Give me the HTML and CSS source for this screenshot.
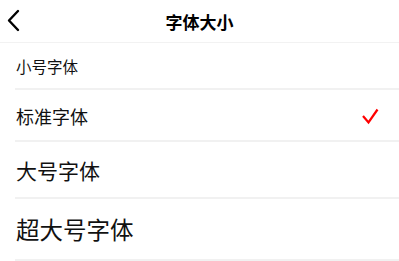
FILE: index.html
```html
<!DOCTYPE html>
<html lang="zh">
<head>
<meta charset="utf-8">
<link rel="stylesheet" href="styles.css">
</head>
<body>
<div class="page">
  <header class="bar">
    <span class="back">
      <svg width="14" height="24" viewBox="0 0 14 24"><path d="M11 3 L2 12.5 L11 22" fill="none" stroke="#000" stroke-width="2.4" stroke-linecap="round" stroke-linejoin="round"/></svg>
    </span>
    <h1 class="title">字体大小</h1>
  </header>
  <ul class="list">
    <li class="row row-s"><span class="label">小号字体</span></li>
    <li class="row row-m"><span class="label">标准字体</span>
      <svg class="check" width="18" height="18" viewBox="0 0 18 18"><path d="M2 9 L7.5 15.5 L16.5 2.5" fill="none" stroke="#f00" stroke-width="2.2" stroke-linejoin="miter"/></svg>
    </li>
    <li class="row row-l"><span class="label">大号字体</span></li>
    <li class="row row-xl"><span class="label">超大号字体</span></li>
  </ul>
</div>
</body>
</html>
```
FILE: styles.css
```css
html, body {
  margin: 0;
  padding: 0;
  background: #fff;
}
body {
  font-family: "Noto Sans CJK SC", "Noto Sans", sans-serif;
  color: #111;
}
.page {
  width: 399px;
}
.bar {
  height: 42px;
  border-bottom: 1px solid #f2f2f2;
  position: relative;
  display: flex;
  align-items: center;
  justify-content: center;
}
.back {
  position: absolute;
  left: 7px;
  top: 8px;
  width: 14px;
  height: 24px;
  display: block;
}
.back svg { display: block; }
.title {
  margin: 0;
  font-size: 17px;
  font-weight: bold;
  line-height: 1;
  padding-top: 1px;
  color: #000;
}
.list {
  list-style: none;
  margin: 0 0 0 15px;
  padding: 0;
}
.row {
  display: flex;
  align-items: center;
  justify-content: space-between;
  border-bottom: 2px solid #f1f1f1;
  padding-left: 1px;
  padding-right: 20px;
}
.label {
  line-height: 1;
  padding-top: 2px;
}
.row-s { height: 45px; font-size: 15.5px; }
.row-m { height: 50px; font-size: 18px; }
.row-l { height: 55px; font-size: 21px; }
.row-xl { height: 60px; font-size: 23.5px; }
.check {
  display: block;
  margin-top: 2px;
}
```
